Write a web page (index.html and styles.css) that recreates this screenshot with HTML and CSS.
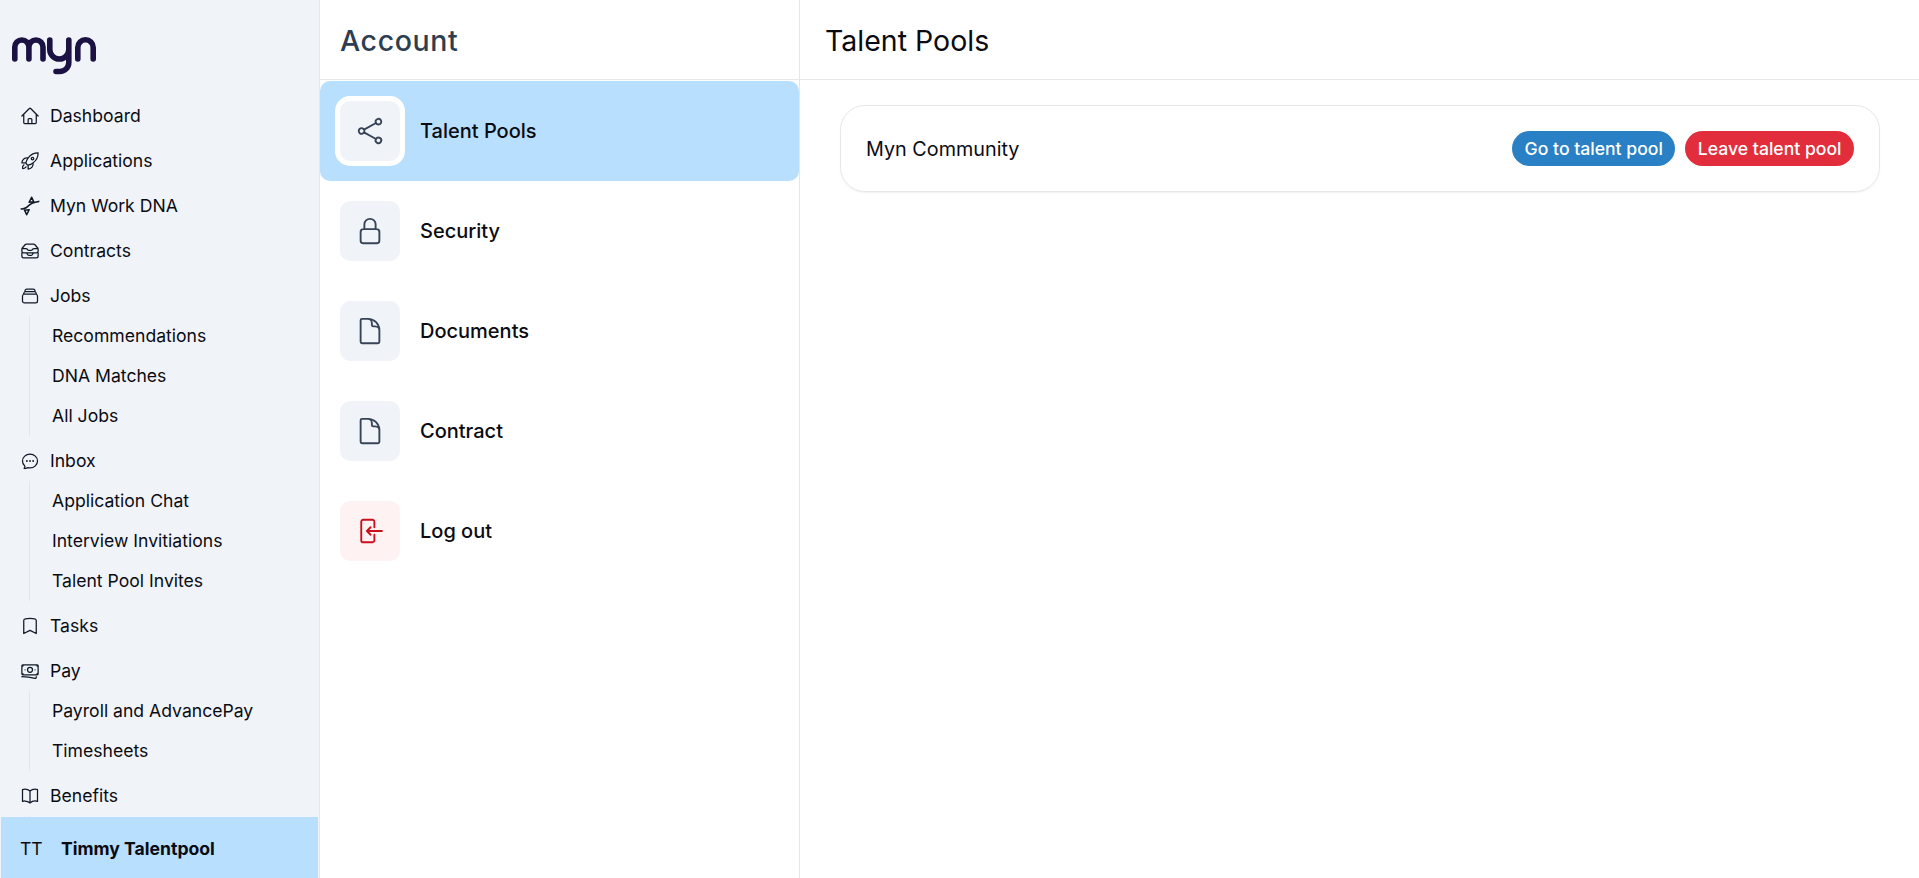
FILE: index.html
```html
<!DOCTYPE html>
<html lang="en">
<head>
<meta charset="utf-8">
<title>Talent Pools</title>
<link rel="stylesheet" href="styles.css">
</head>
<body>
<div class="app">
  <aside class="sidebar">
    <div class="logo-wrap">
      <svg class="logo" viewBox="0 0 86 40" fill="none" stroke="#1b1243" stroke-width="5.6" stroke-linecap="round" stroke-linejoin="round"><path d="M3.800 23V11a7 7 0 0 1 14.100 0V23M17.900 11a7 7 0 0 1 14.100 0V23"/><path d="M38.800 4V13.500a9.500 9.500 0 0 0 19 0V4V26.500a9 9 0 0 1-9 9H45"/><path d="M66.800 23V11.500a7.700 7.700 0 0 1 15.400 0V23"/></svg>
    </div>
    <nav class="nav">
      <a class="nav-item"><svg class="nav-icon" viewBox="0 0 24 24"><path d="m2.250 12 8.954-8.955c.44-.439 1.152-.439 1.591 0L21.750 12M4.500 9.750v10.125c0 .621.504 1.125 1.125 1.125H9.750v-4.875c0-.621.504-1.125 1.125-1.125h2.250c.621 0 1.125.504 1.125 1.125V21h4.125c.621 0 1.125-.504 1.125-1.125V9.750M8.250 21h8.250"/></svg>Dashboard</a>
      <a class="nav-item"><svg class="nav-icon" viewBox="0 0 24 24"><path d="M15.590 14.370a6 6 0 0 1-5.840 7.380v-4.800m5.840-2.580a14.980 14.980 0 0 0 6.160-12.120A14.980 14.980 0 0 0 9.631 8.410m5.960 5.960a14.926 14.926 0 0 1-5.841 2.580m-.119-8.540a6 6 0 0 0-7.381 5.840h4.800m2.581-5.840a14.927 14.927 0 0 0-2.580 5.840m2.699 2.700c-.103.021-.207.041-.311.060a15.090 15.090 0 0 1-2.448-2.448 14.900 14.900 0 0 1 .060-.312m-2.240 2.390a4.493 4.493 0 0 0-1.757 4.306 4.493 4.493 0 0 0 4.306-1.758M16.500 9a1.500 1.500 0 1 1-3 0 1.500 1.500 0 0 1 3 0Z"/></svg>Applications</a>
      <a class="nav-item"><svg class="nav-icon nav-icon-heavy" viewBox="0 0 24 24"><path d="M1.500 15.500c4 .5 6.500-1 9-4s6-4 12-5M14 1.500l-3 6 5.500-.5zM8 22.500l3-6-5.500.5z"/></svg>Myn Work DNA</a>
      <a class="nav-item"><svg class="nav-icon" viewBox="0 0 24 24"><path d="m7.875 14.250 1.214 1.942a2.250 2.250 0 0 0 1.908 1.058h2.006c.776 0 1.497-.4 1.908-1.058l1.214-1.942M2.410 9h4.636a2.250 2.250 0 0 1 1.872 1.002l.164.246a2.250 2.250 0 0 0 1.872 1.002h2.092a2.250 2.250 0 0 0 1.872-1.002l.164-.246A2.250 2.250 0 0 1 16.954 9h4.636M2.410 9a2.250 2.250 0 0 0-.16.832V12a2.250 2.250 0 0 0 2.250 2.250h15A2.250 2.250 0 0 0 21.750 12V9.832c0-.287-.055-.57-.16-.832M2.410 9a2.250 2.250 0 0 1 .382-.632l3.285-3.832a2.250 2.250 0 0 1 1.708-.786h8.430c.657 0 1.281.287 1.709.786l3.284 3.832c.163.19.291.404.382.632M2.250 14.250V18a2.250 2.250 0 0 0 2.250 2.250h15A2.250 2.250 0 0 0 21.750 18v-3.750"/></svg>Contracts</a>
      <div class="nav-group">
        <a class="nav-item"><svg class="nav-icon" viewBox="0 0 24 24"><path d="M6 6.878V6a2.250 2.250 0 0 1 2.250-2.250h7.500A2.250 2.250 0 0 1 18 6v.878m-12 0c.235-.083.487-.128.75-.128h10.500c.263 0 .515.045.75.128m-12 0A2.250 2.250 0 0 0 4.500 9v.878m13.500-3A2.250 2.250 0 0 1 19.500 9v.878m0 0a2.246 2.246 0 0 0-.75-.128H5.250c-.263 0-.515.045-.75.128m15 0A2.250 2.250 0 0 1 21 12v6a2.250 2.250 0 0 1-2.250 2.250H5.250A2.250 2.250 0 0 1 3 18v-6c0-.98.626-1.813 1.500-2.122"/></svg>Jobs</a>
        <div class="sub-list"><a class="sub-item">Recommendations</a><a class="sub-item">DNA Matches</a><a class="sub-item">All Jobs</a></div>
      </div>
      <div class="nav-group">
        <a class="nav-item"><svg class="nav-icon" viewBox="0 0 24 24"><path d="M8.625 12a.375.375 0 1 1-.75 0 .375.375 0 0 1 .75 0Zm0 0H8.250m4.125 0a.375.375 0 1 1-.75 0 .375.375 0 0 1 .75 0Zm0 0H12m4.125 0a.375.375 0 1 1-.75 0 .375.375 0 0 1 .75 0Zm0 0h-.375M21 12c0 4.556-4.030 8.250-9 8.250a9.764 9.764 0 0 1-2.555-.337A5.972 5.972 0 0 1 5.410 20.970a5.969 5.969 0 0 1-.474-.065 4.480 4.480 0 0 0 .978-2.025c.09-.457-.133-.901-.467-1.226C3.930 16.178 3 14.189 3 12c0-4.556 4.030-8.250 9-8.250s9 3.694 9 8.250Z"/></svg>Inbox</a>
        <div class="sub-list"><a class="sub-item">Application Chat</a><a class="sub-item">Interview Invitiations</a><a class="sub-item">Talent Pool Invites</a></div>
      </div>
      <a class="nav-item"><svg class="nav-icon" viewBox="0 0 24 24"><path d="M17.593 3.322c1.100.128 1.907 1.077 1.907 2.185V21L12 17.250 4.500 21V5.507c0-1.108.806-2.057 1.907-2.185a48.507 48.507 0 0 1 11.186 0Z"/></svg>Tasks</a>
      <div class="nav-group">
        <a class="nav-item"><svg class="nav-icon" viewBox="0 0 24 24"><path d="M2.250 18.750a60.070 60.070 0 0 1 15.797 2.101c.727.198 1.453-.342 1.453-1.096V18.750M3.750 4.500v.75A.75.75 0 0 1 3 6h-.75m0 0v-.375c0-.621.504-1.125 1.125-1.125H20.250M2.250 6v9m18-10.500v.75c0 .414.336.75.75.75h.75m-1.500-1.500h.375c.621 0 1.125.504 1.125 1.125v9.750c0 .621-.504 1.125-1.125 1.125h-.375m1.500-1.500H21a.75.75 0 0 0-.75.75v.75m0 0H3.750m0 0h-.375a1.125 1.125 0 0 1-1.125-1.125V15m1.500 1.500v-.75A.75.75 0 0 0 3 15h-.75M15 10.500a3 3 0 1 1-6 0 3 3 0 0 1 6 0Zm3 0h.008v.008H18V10.500Zm-12 0h.008v.008H6V10.500Z"/></svg>Pay</a>
        <div class="sub-list"><a class="sub-item">Payroll and AdvancePay</a><a class="sub-item">Timesheets</a></div>
      </div>
      <div class="nav-group">
        <a class="nav-item"><svg class="nav-icon" viewBox="0 0 24 24"><path d="M12 6.042A8.967 8.967 0 0 0 6 3.750c-1.052 0-2.062.18-3 .512v14.250A8.987 8.987 0 0 1 6 18c2.305 0 4.408.867 6 2.292m0-14.250a8.966 8.966 0 0 1 6-2.292c1.052 0 2.062.18 3 .512v14.250A8.987 8.987 0 0 0 18 18a8.967 8.967 0 0 0-6 2.292m0-14.250v14.250"/></svg>Benefits</a>
        <div class="sub-list sub-list-clipped"></div>
      </div>
    </nav>
    <div class="user"><span class="user-initials">TT</span><span class="user-name">Timmy Talentpool</span></div>
  </aside>

  <section class="account">
    <header class="pane-head"><h1 class="account-title">Account</h1></header>
    <ul class="menu">
      <li class="menu-item menu-item-active"><span class="tile"><svg class="tile-icon" viewBox="0 0 24 24"><path d="M7.217 10.907a2.250 2.250 0 1 0 0 2.186m0-2.186c.18.324.283.696.283 1.093s-.103.77-.283 1.093m0-2.186 9.566-5.314m-9.566 7.500 9.566 5.314m0 0a2.250 2.250 0 1 0 3.935 2.186 2.250 2.250 0 0 0-3.935-2.186Zm0-12.814a2.250 2.250 0 1 0 3.933-2.185 2.250 2.250 0 0 0-3.933 2.185Z"/></svg></span>Talent Pools</li>
      <li class="menu-item"><span class="tile"><svg class="tile-icon" viewBox="0 0 24 24"><path d="M16.500 10.500V6.750a4.500 4.500 0 1 0-9 0v3.750m-.75 11.250h10.500a2.250 2.250 0 0 0 2.250-2.250v-6.750a2.250 2.250 0 0 0-2.250-2.250H6.750a2.250 2.250 0 0 0-2.250 2.250v6.750a2.250 2.250 0 0 0 2.250 2.250Z"/></svg></span>Security</li>
      <li class="menu-item"><span class="tile"><svg class="tile-icon" viewBox="0 0 24 24"><path d="M19.500 14.250v-2.625a3.375 3.375 0 0 0-3.375-3.375h-1.500A1.125 1.125 0 0 1 13.500 7.125v-1.500a3.375 3.375 0 0 0-3.375-3.375H8.250m2.250 0H5.625c-.621 0-1.125.504-1.125 1.125v17.250c0 .621.504 1.125 1.125 1.125h12.750c.621 0 1.125-.504 1.125-1.125V11.250a9 9 0 0 0-9-9Z"/></svg></span>Documents</li>
      <li class="menu-item"><span class="tile"><svg class="tile-icon" viewBox="0 0 24 24"><path d="M19.500 14.250v-2.625a3.375 3.375 0 0 0-3.375-3.375h-1.500A1.125 1.125 0 0 1 13.500 7.125v-1.500a3.375 3.375 0 0 0-3.375-3.375H8.250m2.250 0H5.625c-.621 0-1.125.504-1.125 1.125v17.250c0 .621.504 1.125 1.125 1.125h12.750c.621 0 1.125-.504 1.125-1.125V11.250a9 9 0 0 0-9-9Z"/></svg></span>Contract</li>
      <li class="menu-item"><span class="tile tile-danger"><svg class="tile-icon tile-icon-danger" viewBox="0 0 24 24"><path d="M15.500 9V4.500A1.500 1.500 0 0 0 14 3H6.500A1.500 1.500 0 0 0 5 4.500v15A1.500 1.500 0 0 0 6.500 21H14a1.500 1.500 0 0 0 1.500-1.500V15M21.500 12H9.500m0 0 3-3m-3 3 3 3"/></svg></span>Log out</li>
    </ul>
  </section>

  <main class="detail">
    <header class="pane-head pane-head-detail"><h1 class="detail-title">Talent Pools</h1></header>
    <div class="detail-body">
      <div class="card">
        <span class="card-name">Myn Community</span>
        <div class="card-actions"><button class="pill pill-blue">Go to talent pool</button><button class="pill pill-red">Leave talent pool</button></div>
      </div>
    </div>
  </main>
</div>
</body>
</html>
```

FILE: styles.css
```css
* { box-sizing: border-box; }
html, body { margin: 0; height: 100%; }
body { font-family: Inter, "Liberation Sans", sans-serif; color: #0b0b12; background: #fff; overflow: hidden; }
.app { display: flex; height: 878px; }

.sidebar { width: 320px; flex: none; height: 100%; background: #f0f4f9; border-right: 1px solid #e5e7eb; display: flex; flex-direction: column; overflow: hidden; }
.logo-wrap { height: 96px; flex: none; padding: 36px 0 0 11px; }
.logo { display: block; width: 86px; height: 40px; }
.nav { flex: 1; min-height: 0; overflow: hidden; display: flex; flex-direction: column; gap: 5px; }
.nav-group { display: flex; flex-direction: column; }
.nav-item { height: 40px; flex: none; display: flex; align-items: center; gap: 10px; padding-left: 20px; font-size: 17.6px; line-height: 40px; }
.nav-icon { width: 20px; height: 20px; flex: none; fill: none; stroke: #111827; stroke-width: 1.5; stroke-linecap: round; stroke-linejoin: round; }
.nav-icon-heavy { stroke-width: 1.9; }
.sub-list { margin-left: 29px; padding-left: 22px; border-left: 1px solid #e2e6ec; display: flex; flex-direction: column; }
.sub-list-clipped { height: 20px; }
.sub-item { height: 40px; display: flex; align-items: center; padding-bottom: 2px; font-size: 17.6px; }
.user { height: 61px; flex: none; margin: 0 0 0 1px; width: 317px; background: #b8dffe; display: flex; align-items: center; padding: 2px 0 0 19px; gap: 19px; font-size: 17.6px; }
.user-initials { width: 22px; }
.user-name { font-weight: 700; }

.account { width: 480px; flex: none; height: 100%; border-right: 1px solid #e5e7eb; display: flex; flex-direction: column; }
.pane-head { height: 80px; flex: none; display: flex; align-items: center; padding: 2px 0 0 20px; border-bottom: 1px solid #e5e7eb; }
.pane-head-detail { padding-left: 25px; }
.account-title, .detail-title { margin: 0; font-size: 28.5px; font-weight: 400; }
.account-title { color: #2c3e50; font-weight: 450; letter-spacing: .6px; }
.detail-title { color: #0b0b12; }
.menu { list-style: none; margin: 1px 0 0; padding: 0; display: flex; flex-direction: column; }
.menu-item { height: 100px; display: flex; align-items: center; gap: 20px; padding-left: 20px; font-size: 20px; font-weight: 500; color: #0b0b12; }
.menu-item-active { background: #b8dffe; border-radius: 10px; }
.tile { width: 60px; height: 60px; flex: none; border-radius: 10px; background: #f0f4f9; display: flex; align-items: center; justify-content: center; }
.menu-item-active .tile { box-shadow: 0 0 0 5px #fff; }
.tile-danger { background: #fef2f2; }
.tile-icon { width: 30px; height: 30px; fill: none; stroke: #374357; stroke-width: 1.5; stroke-linecap: round; stroke-linejoin: round; }
.tile-icon-danger { stroke: #c9101c; }

.detail { flex: 1; min-width: 0; display: flex; flex-direction: column; }
.detail-body { padding: 25px 39px 0 40px; }
.card { height: 87px; border: 1px solid #e5e7eb; border-radius: 25px; box-shadow: 0 1px 2px rgba(0,0,0,.06); display: flex; align-items: center; justify-content: space-between; padding: 0 25px; }
.card-name { font-size: 19.8px; }
.card-actions { display: flex; gap: 10px; }
.pill { height: 35px; border: 0; border-radius: 18px; padding: 0 12.5px; color: #fff; font: 500 17.6px Inter, "Liberation Sans", sans-serif; }
.pill-blue { background: #2980c4; }
.pill-red { background: #e22e3c; }
```
